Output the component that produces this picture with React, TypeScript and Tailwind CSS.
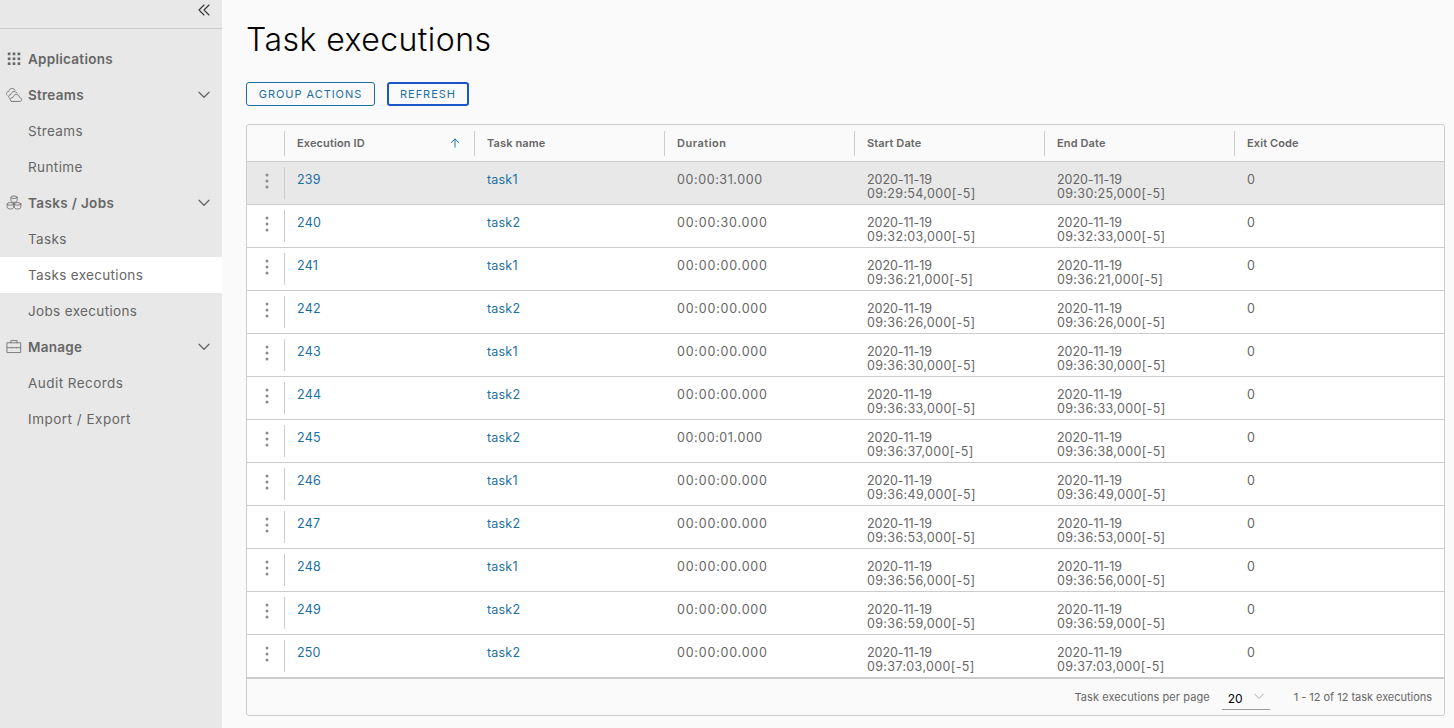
import type { ReactNode } from "react";

type Execution = { id: number; task: string; duration: string; start: string; end: string };

const executions: Execution[] = [
  { id: 239, task: "task1", duration: "00:00:31.000", start: "09:29:54,000[-5]", end: "09:30:25,000[-5]" },
  { id: 240, task: "task2", duration: "00:00:30.000", start: "09:32:03,000[-5]", end: "09:32:33,000[-5]" },
  { id: 241, task: "task1", duration: "00:00:00.000", start: "09:36:21,000[-5]", end: "09:36:21,000[-5]" },
  { id: 242, task: "task2", duration: "00:00:00.000", start: "09:36:26,000[-5]", end: "09:36:26,000[-5]" },
  { id: 243, task: "task1", duration: "00:00:00.000", start: "09:36:30,000[-5]", end: "09:36:30,000[-5]" },
  { id: 244, task: "task2", duration: "00:00:00.000", start: "09:36:33,000[-5]", end: "09:36:33,000[-5]" },
  { id: 245, task: "task2", duration: "00:00:01.000", start: "09:36:37,000[-5]", end: "09:36:38,000[-5]" },
  { id: 246, task: "task1", duration: "00:00:00.000", start: "09:36:49,000[-5]", end: "09:36:49,000[-5]" },
  { id: 247, task: "task2", duration: "00:00:00.000", start: "09:36:53,000[-5]", end: "09:36:53,000[-5]" },
  { id: 248, task: "task1", duration: "00:00:00.000", start: "09:36:56,000[-5]", end: "09:36:56,000[-5]" },
  { id: 249, task: "task2", duration: "00:00:00.000", start: "09:36:59,000[-5]", end: "09:36:59,000[-5]" },
  { id: 250, task: "task2", duration: "00:00:00.000", start: "09:37:03,000[-5]", end: "09:37:03,000[-5]" },
];

const columns = ["Execution ID", "Task name", "Duration", "Start Date", "End Date", "Exit Code"];

const GRID = "grid grid-cols-[38px_190px_190px_190px_190px_190px_1fr]";

function Icon({ children }: { children: ReactNode }) {
  return (
    <svg viewBox="0 0 36 36" className="size-4 shrink-0" fill="none" stroke="#707070" strokeWidth="2" strokeLinejoin="round" strokeLinecap="round">
      {children}
    </svg>
  );
}

const AppsIcon = () => (
  <Icon>
    <g fill="#666" stroke="none">
      {[3.5, 14.5, 25.5].map((y) => [4, 15, 26].map((x) => <rect key={`${x}-${y}`} x={x} y={y} width="6" height="6" />))}
    </g>
  </Icon>
);

const CloudsIcon = () => (
  <Icon>
    <path d="M13 32.500H31c5 0 5.500-7 .5-8.500-1.500-.4-1.500-1.500-2-3-1.500-5-10.500-6-12.500 0-.5 2-1.500 2.500-3.500 3-5 1.500-5 8.500-.5 8.500Z" />
    <path d="M8 25.500c-3.500-2-3-6.500 1-8 2-.5 2.500-1 3-3 1.500-6 11-5.500 13-.5" />
    <path d="M2.500 18.500c-3.500-2-2-6.500 1.500-7.500 2-.5 2.500-1 3-3 1-4 5-5.500 8.500-4.500 2.500.5 4 2 4.500 3.500" />
  </Icon>
);

const JobsIcon = () => (
  <Icon>
    <path d="M11 5.500v7.500c0 2 3 3.500 7 3.500s7-1.500 7-3.500V5.500" />
    <ellipse cx="18" cy="5" rx="7" ry="2.800" />
    <path d="M2.500 20.500V27c0 2.500 3 4.500 7.500 4.500s7.500-2 7.500-4.500v-6.500" />
    <ellipse cx="10" cy="20" rx="7.500" ry="3" />
    <path d="M18.500 20.500V27c0 2.500 3 4.500 7.500 4.500s7.500-2 7.500-4.500v-6.500" />
    <ellipse cx="26" cy="20" rx="7.500" ry="3" />
  </Icon>
);

const BriefcaseIcon = () => (
  <Icon>
    <path d="M3 8.500h30v22H3ZM11 8.500V3.500h14v5" />
    <path d="M3 19.500h7M14 19.500h8M26 19.500h7" />
    <path d="M12 18.500v2M24 18.500v2" />
  </Icon>
);

function Chevron({ className }: { className: string }) {
  return (
    <svg viewBox="0 0 12 8" className={className} fill="none" stroke="currentColor" strokeLinecap="round" strokeLinejoin="round">
      <path d="M1 1.200 6 6.300 11 1.200" />
    </svg>
  );
}

function Group({ icon, label, spacing, open }: { icon: ReactNode; label: string; spacing: string; open?: boolean }) {
  return (
    <div className="flex h-9 items-center pr-3 pl-1.5">
      {icon}
      <span className={`ml-1.5 text-[13.5px] font-semibold whitespace-nowrap ${spacing}`}>{label}</span>
      {open && <Chevron className="ml-auto h-2 w-3 stroke-[1.3]" />}
    </div>
  );
}

function Item({ label, spacing, active }: { label: string; spacing: string; active?: boolean }) {
  return (
    <div className={`flex h-9 items-center pl-7 text-[13.5px] whitespace-nowrap ${spacing} ${active ? "bg-white" : ""}`}>{label}</div>
  );
}

function Sidebar() {
  return (
    <nav className="w-[222px] shrink-0 bg-[#e8e8e8] text-[#666]">
      <div className="flex h-[29px] items-start justify-end border-b border-[#ccc] pt-1 pr-3">
        <svg viewBox="0 0 12 12" className="size-3" fill="none" stroke="#333" strokeWidth="1.1" strokeLinecap="round" strokeLinejoin="round">
          <path d="M6 1 1 6l5 5M11 1 6 6l5 5" />
        </svg>
      </div>
      <div className="pt-3">
        <Group icon={<AppsIcon />} label="Applications" spacing="tracking-[0.27px]" />
        <Group icon={<CloudsIcon />} label="Streams" spacing="tracking-[0.25px]" open />
        <Item label="Streams" spacing="tracking-[0.35px]" />
        <Item label="Runtime" spacing="tracking-[0.4px]" />
        <Group icon={<JobsIcon />} label="Tasks / Jobs" spacing="tracking-[0.35px]" open />
        <Item label="Tasks" spacing="tracking-[0.35px]" />
        <Item label="Tasks executions" spacing="tracking-[0.33px]" active />
        <Item label="Jobs executions" spacing="tracking-[0.35px]" />
        <Group icon={<BriefcaseIcon />} label="Manage" spacing="tracking-[0.25px]" open />
        <Item label="Audit Records" spacing="tracking-[0.45px]" />
        <Item label="Import / Export" spacing="tracking-[0.5px]" />
      </div>
    </nav>
  );
}

function Row({ row, active }: { row: Execution; active: boolean }) {
  return (
    <div className={`${GRID} h-[43px] border-b border-[#ccc] pt-[5px] text-[12.5px] leading-[14px] ${active ? "bg-[#e8e8e8]" : "bg-white"}`}>
      <div className="flex h-8 items-center justify-center border-r border-[#ccc] pl-[3px]">
        <svg viewBox="0 0 4 16" className="mt-[-5px] h-4 w-1 fill-[#8c8c8c]">
          <circle cx="2" cy="2" r="1.500" />
          <circle cx="2" cy="8" r="1.500" />
          <circle cx="2" cy="14" r="1.500" />
        </svg>
      </div>
      <div className="pt-[6px] pl-3 tracking-[0.2px] text-[#1b6fa3]">{row.id}</div>
      <div className="pt-[6px] pl-3 tracking-[0.2px] text-[#1b6fa3]">{row.task}</div>
      <div className={`pt-[6px] pl-3 ${row.duration.includes("1") ? "tracking-[0.6px]" : "tracking-[0.8px]"}`}>{row.duration}</div>
      <div className="pt-[6px] pl-3 tracking-[0.36px]"><span className="tracking-[-0.05px]">2020-11-19</span><br />{row.start}</div>
      <div className="pt-[6px] pl-3 tracking-[0.36px]"><span className="tracking-[-0.05px]">2020-11-19</span><br />{row.end}</div>
      <div className="pt-[6px] pl-3">0</div>
    </div>
  );
}

export default function App() {
  return (
    <div className="flex h-[728px] w-[1454px] overflow-hidden bg-[#fafafa] font-[Inter,sans-serif] text-[#666]">
      <Sidebar />
      <main className="flex-1 pl-6">
        <h1 className="mt-[21px] text-[32px] leading-[38px] font-[350] tracking-[0.45px] whitespace-nowrap text-black">Task executions</h1>
        <div className="mt-[23px] flex gap-3 text-[11px] text-[#1b6fa3]">
          <button className="h-6 w-[129px] rounded-[3px] border border-[#1b6fa3] tracking-[0.95px] whitespace-nowrap">GROUP ACTIONS</button>
          <button className="h-6 w-[82px] rounded-[3px] border-2 border-[#1a56c8] tracking-[1px] whitespace-nowrap">REFRESH</button>
        </div>
        <section className="mt-[18px] h-[592px] w-[1199px] overflow-hidden rounded-[3px] border border-[#ccc]">
          <div className={`${GRID} h-[37px] border-b border-[#ccc] pt-[6px] text-[11px] font-semibold tracking-[0.12px]`}>
            <div className="h-[25px] border-r border-[#ccc]" />
            {columns.map((c, i) => (
              <div key={c} className={`flex h-[25px] items-center justify-between pr-[14px] pl-3 ${i < 5 ? "border-r border-[#ccc]" : ""} ${i === 2 ? "tracking-[0.5px]" : ""}`}>
                {c}
                {i === 0 && (
                  <svg viewBox="0 0 10 10" className="mb-0.5 size-2.5" fill="none" stroke="#1b78b0" strokeLinecap="round" strokeLinejoin="round">
                    <path d="M5 9.200V1M1.300 4.500 5 1l3.700 3.500" />
                  </svg>
                )}
              </div>
            ))}
          </div>
          {executions.map((r, i) => (
            <Row key={r.id} row={r} active={i === 0} />
          ))}
          <div className="flex h-[37px] items-center justify-end border-t border-[#ccc] pr-3 text-[11px] whitespace-nowrap">
            <span className="tracking-[0.08px]">Task executions per page</span>
            <div className="ml-3 flex h-[25px] w-12 items-center justify-between border-b border-[#999] pt-1 pr-1.5 pl-1.5 text-xs text-black">
              20
              <Chevron className="mb-[5px] h-[7px] w-2.5 stroke-1 text-[#999]" />
            </div>
            <span className="ml-6 tracking-[-0.03px]">1 - 12 of 12 task executions</span>
          </div>
        </section>
      </main>
    </div>
  );
}
